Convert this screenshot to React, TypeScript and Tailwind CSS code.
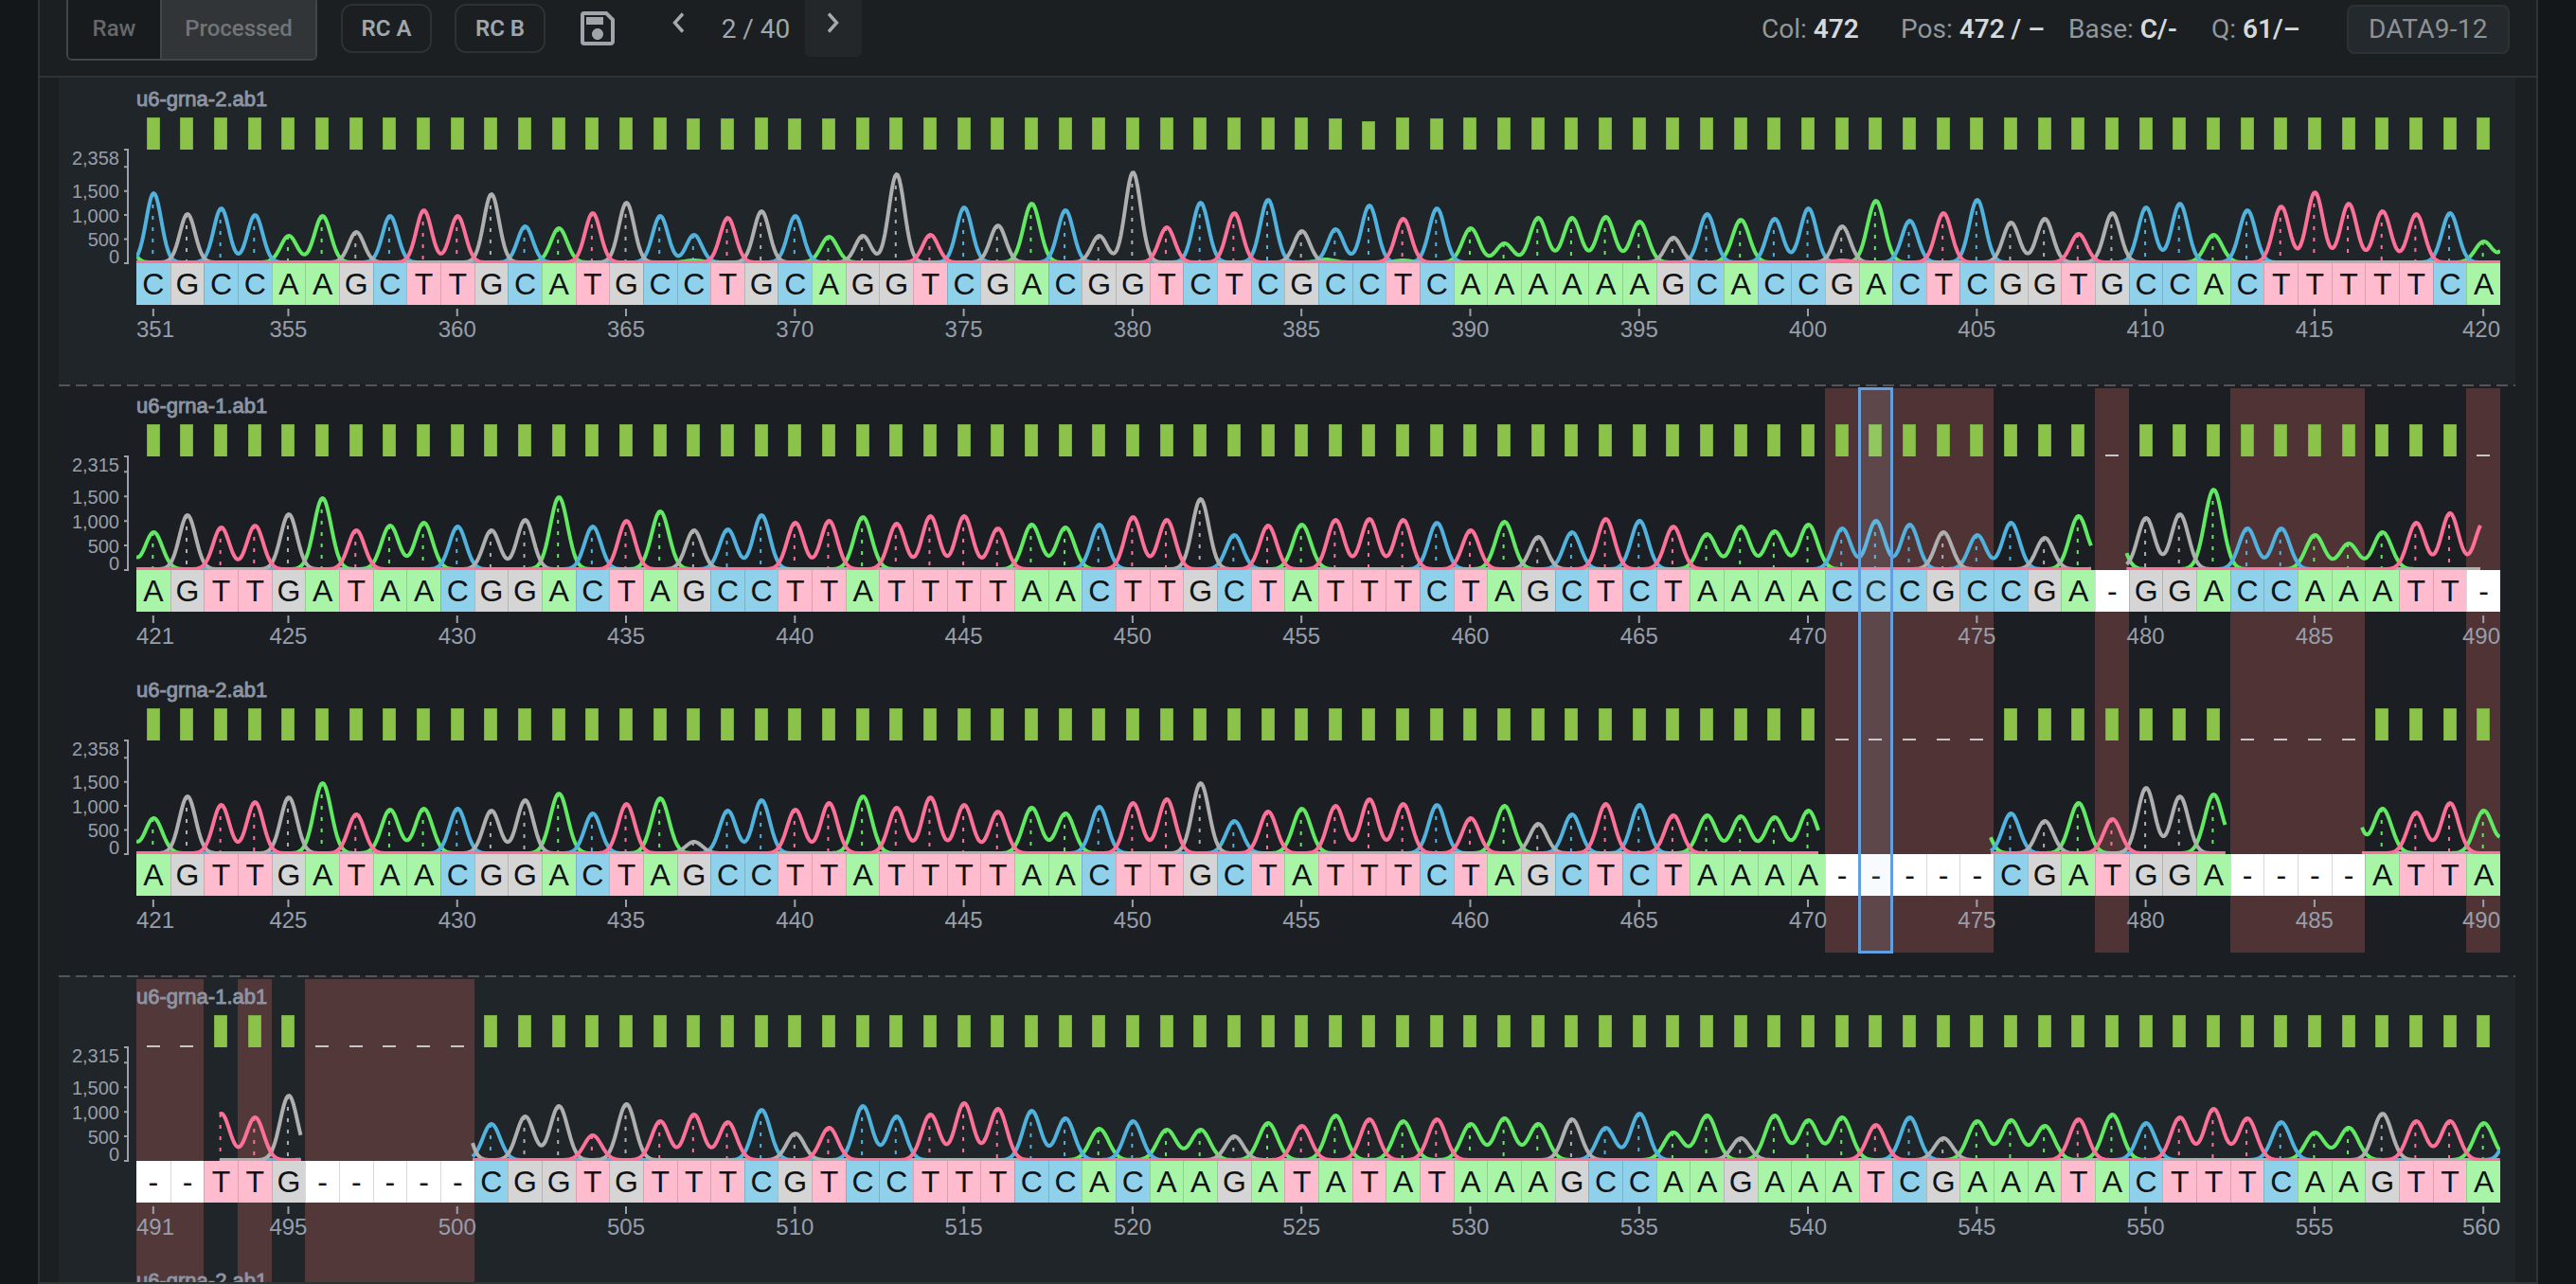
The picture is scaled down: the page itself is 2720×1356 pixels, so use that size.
import { MdOutlineSave } from "react-icons/md";

type Base = "A" | "C" | "G" | "T";

type TrackData = {
  name: string;
  max: number;
  start: number;
  seq: string;
  peaks: number[];
  segments: [number, number][];
  extra: [Base, number, number][];
  low?: Record<number, number>;
};

const COLS = 70;
const WIDTH = 2496;
const COL = WIDTH / COLS;
const PLOT = 120;

const LINE = { A: "#62e964", C: "#50b2dd", G: "#afafaf", T: "#fb7197" };

const CELL: Record<string, string> = {
  A: "bg-[#a9f5a7]",
  C: "bg-[#8fd0ea]",
  G: "bg-[#d5d5d5]",
  T: "bg-[#ffbccf]",
  "-": "bg-white",
};

const trackA: TrackData = {
  name: "u6-grna-2.ab1",
  max: 2358,
  start: 351,
  seq: "CGCCAAGCTTGCATGCCTGCAGGTCGACGGTCTCGCCTCAAAAAAGCACCGACTCGGTGCCACTTTTTCA",
  peaks: [
    73, 51, 57, 50, 28, 49, 32, 49, 55, 49, 72, 38, 36, 52, 63, 49, 29, 47, 54, 49,
    27, 28, 93, 29, 58, 39, 62, 55, 28, 95, 37, 63, 52, 66, 33, 35, 60, 46, 57, 36,
    20, 47, 47, 48, 43, 26, 51, 45, 46, 57, 38, 65, 44, 52, 66, 42, 46, 30, 52, 58,
    62, 29, 55, 59, 74, 62, 54, 51, 52, 22,
  ],
  segments: [[0, 2496]],
  extra: [["A", -1, 60], ["A", 16, 2], ["A", 34.7, 3], ["A", 37, 2], ["T", 50, 2], ["A", 70, 70]],
  low: { 16: 33, 17: 33, 19: 33, 20: 33, 35: 33, 36: 30.5, 38: 33 },
};

const trackB: TrackData = {
  name: "u6-grna-1.ab1",
  max: 2315,
  start: 421,
  seq: "AGTTGATAACGGACTAGCCTTATTTTAACTTGCTATTTCTAGCTCTAAAACCCGCCGA-GGACCAAATT-",
  peaks: [
    39, 57, 44, 46, 58, 75, 41, 46, 49, 45, 41, 52, 76, 45, 51, 61, 41, 42, 57, 49,
    51, 55, 48, 56, 56, 43, 47, 44, 47, 55, 52, 74, 36, 46, 47, 52, 53, 52, 49, 41,
    50, 34, 39, 53, 51, 45, 37, 45, 40, 47, 43, 51, 47, 39, 36, 49, 33, 56, 0, 54,
    58, 84, 43, 43, 36, 27, 39, 49, 59, 0,
  ],
  segments: [[0, 2065], [2101.5, 2475]],
  extra: [["A", -1, 50], ["A", 58, 60], ["G", 58, 6], ["T", 69, 50]],
};

const trackC: TrackData = {
  name: "u6-grna-2.ab1",
  max: 2358,
  start: 421,
  seq: "AGTTGATAACGGACTAGCCTTATTTTAACTTGCTATTTCTAGCTCTAAAA-----CGATGGA----ATTA",
  peaks: [
    37, 60, 51, 54, 59, 74, 41, 46, 47, 47, 45, 56, 63, 42, 52, 58, 12, 45, 56, 46,
    53, 60, 48, 59, 51, 44, 48, 42, 49, 53, 57, 74, 34, 44, 47, 50, 57, 52, 51, 37,
    50, 31, 41, 52, 51, 40, 40, 39, 38, 45, 0, 0, 0, 0, 0, 42, 34, 53, 36, 69,
    60, 62, 0, 0, 0, 0, 47, 43, 53, 45,
  ],
  segments: [[0, 1777], [1958, 2205.5], [2350, 2496]],
  extra: [["A", -1, 50], ["A", 54, 52], ["A", 62, 50], ["A", 65, 70], ["A", 70, 55]],
};

const trackD: TrackData = {
  name: "u6-grna-1.ab1",
  max: 2315,
  start: 491,
  seq: "--TTG-----CGGTGTTTCGTCCTTTCCACAAGATATATAAAGCCAAGAAATCGAAATACTTTCAAGTTA",
  peaks: [
    0, 0, 49, 45, 68, 0, 0, 0, 0, 0, 38, 46, 57, 26, 59, 41, 48, 40, 53, 28,
    34, 57, 46, 48, 60, 54, 52, 44, 33, 41, 32, 32, 25, 39, 36, 47, 43, 41, 43, 38,
    44, 38, 43, 34, 49, 29, 47, 23, 47, 42, 45, 37, 45, 23, 41, 42, 36, 43, 48, 39,
    45, 54, 44, 40, 29, 34, 49, 41, 41, 39,
  ],
  segments: [[88, 174.5], [355, 2496]],
  extra: [["G", 9, 80], ["C", 5, 14], ["C", 70, 75]],
};

function tracePath(track: TrackData, base: Base, from: number, to: number) {
  const peaks = track.peaks
    .map((h, i) => [track.seq[i], i, h] as [string, number, number])
    .concat(track.extra)
    .filter((p) => p[0] === base && p[2] > 0)
    .map(([, i, h]) => ({ x: (i + 0.5) * COL + 0.5, i, h }));

  const points: string[] = [];
  for (let x = from; x <= to; x += 1.5) {
    let y = 0;
    for (const p of peaks) {
      const d = x - p.x;
      if (Math.abs(d) > 60) continue;
      // peaks get wider further along the read
      const s = 8 + (track.start - 351 + p.i) * 0.0075 + (base === "A" ? 0.5 : 0);
      y += p.h * Math.exp(-(d * d) / (2 * s * s));
    }
    points.push(x.toFixed(1) + "," + (PLOT - 1 - y).toFixed(2));
  }
  return "M" + points.join("L");
}

function Trace({ track }: { track: TrackData }) {
  return (
    <svg width={WIDTH} height={PLOT} className="block" fill="none">
      {track.peaks.map((h, i) =>
        h > 0 ? (
          <line
            key={i}
            x1={(i + 0.5) * COL - 0.5}
            x2={(i + 0.5) * COL - 0.5}
            y1={PLOT - 1 - h}
            y2={PLOT}
            stroke={LINE[track.seq[i] as Base]}
            strokeWidth="2"
            strokeDasharray="4 8"
          />
        ) : null
      )}
      {(["A", "C", "G", "T"] as Base[]).map((base) =>
        track.segments.map(([from, to]) => (
          <path
            key={base + from}
            d={tracePath(track, base, from, to)}
            stroke={LINE[base]}
            strokeWidth="4"
            strokeLinejoin="round"
          />
        ))
      )}
    </svg>
  );
}

function Axis({ max }: { max: number }) {
  const y = (v: number) => PLOT - (v * PLOT) / max;
  return (
    <svg width="82" height="124" className="block overflow-visible font-['Liberation_Sans',sans-serif] text-[20px]">
      <path
        d={[max, 2000, 1500, 1000, 500, 0].map((v) => `M69 ${y(v)}H73`).join("") + "M73 -1V121"}
        stroke="#9aa1ad"
        strokeWidth="2"
      />
      <g fill="#979eaa" textAnchor="end">
        <text x="64" y="16">{max.toLocaleString("en-US")}</text>
        <text x="64" y={y(1500) + 7.5}>1,500</text>
        <text x="64" y={y(1000) + 7.5}>1,000</text>
        <text x="64" y={y(500) + 7.5}>500</text>
        <text x="64" y="120">0</text>
      </g>
    </svg>
  );
}

function Ruler({ start }: { start: number }) {
  const ticks: number[] = [];
  for (let i = 0; i < COLS; i++) {
    if (i === 0 || (start + i) % 5 === 0) ticks.push(i);
  }
  return (
    <svg width={WIDTH} height="40" className="block font-['Liberation_Sans',sans-serif] text-[24px]">
      {ticks.map((i) => {
        const x = (i + 0.5) * COL;
        const first = i === 0;
        const last = i === COLS - 1;
        return (
          <g key={i}>
            <path d={`M${x} 4V12`} stroke="#9aa1ad" strokeWidth="2" />
            <text
              x={first ? 0 : last ? WIDTH : x}
              y="34"
              fill="#979eaa"
              textAnchor={first ? "start" : last ? "end" : "middle"}
            >
              {start + i}
            </text>
          </g>
        );
      })}
    </svg>
  );
}

function TrackName({ name }: { name: string }) {
  return (
    <div className="h-[38px] pt-2 font-['Liberation_Sans',sans-serif] text-[22px] leading-[22px] text-[#8d94a2] [-webkit-text-stroke:0.9px_#8d94a2]">
      {name}
    </div>
  );
}

function Track({ track }: { track: TrackData }) {
  return (
    <div className="relative flex h-[300px] shrink-0">
      <div className="w-[82px] shrink-0 pt-[72px]">
        <Axis max={track.max} />
      </div>
      <div className="w-[2496px] shrink-0 font-['Liberation_Sans',sans-serif]">
        <TrackName name={track.name} />
        <div className="grid h-[34px] grid-cols-[repeat(70,minmax(0,1fr))] items-end justify-items-center">
          {track.seq.split("").map((b, i) =>
            b === "-" ? (
              <span key={i} className="h-[2px] w-[14px] bg-[#c9c5c6]" />
            ) : (
              <span
                key={i}
                className="w-[14px] rounded-t-[1px] border border-b-0 border-[#79ab42] bg-[#8bc34a]"
                style={{ height: track.low?.[i] ?? 34 }}
              />
            )
          )}
        </div>
        <Trace track={track} />
        <div className="grid h-[44px] grid-cols-[repeat(70,minmax(0,1fr))] text-center text-[32px] leading-[44px] text-[#101214]">
          {track.seq.split("").map((b, i) => (
            <span key={i} className={"border-l border-black/15 first:border-l-0 " + CELL[b]}>
              {b}
            </span>
          ))}
        </div>
        <Ruler start={track.start} />
      </div>
    </div>
  );
}

function Group({
  tracks,
  next,
  bands = [],
  selected,
  shaded,
  first,
}: {
  tracks: TrackData[];
  next?: string;
  bands?: [number, number][];
  selected?: number;
  shaded?: boolean;
  first?: boolean;
}) {
  return (
    <section
      className={
        "flex shrink-0 flex-col " + (next ? "" : "pb-5 ") + (shaded ? "bg-[#202529]" : "bg-[#1b1e22]")
      }
    >
      {first ? (
        <div className="h-1" />
      ) : (
        <div className="mb-[2px] h-[2px] bg-[repeating-linear-gradient(90deg,#50555c_0_12px,transparent_12px_18px)]" />
      )}
      <div className="relative">
        {bands.map(([from, count]) => (
          <div
            key={from}
            className="absolute top-0 bottom-1 bg-[#eb726e]/25"
            style={{ left: 82 + from * COL, width: count * COL }}
          />
        ))}
        {tracks.map((t, i) => (
          <Track key={i} track={t} />
        ))}
        {next && (
          <div className="relative ml-[82px]">
            <TrackName name={next} />
          </div>
        )}
        {selected !== undefined && (
          <div
            className="absolute top-[-1px] bottom-[3px] border-[3px] border-[#639edf] bg-[#c8dceb]/12"
            style={{ left: 81 + selected * COL, width: COL + 2 }}
          />
        )}
      </div>
    </section>
  );
}

function Chevron({ d }: { d: string }) {
  return (
    <svg width="16" height="24" fill="none" stroke="#a4a9ae" strokeWidth="3.4">
      <path d={d} />
    </svg>
  );
}

function Stat({ label, value, className }: { label: string; value: string; className: string }) {
  return (
    <div className={"shrink-0 whitespace-pre text-[28px] text-[#92979c] " + className}>
      {label} <b className="font-semibold text-[#d6d9dc]">{value}</b>
    </div>
  );
}

function Toolbar() {
  return (
    <header className="h-[82px] shrink-0 border-b-2 border-[#2e3333] bg-[#1b1f21]">
      <div className="flex h-[60px] items-center pl-[28px]">
        <div className="flex h-[68px] w-[265px] shrink-0 overflow-hidden rounded-md border-2 border-[#414746] text-[24px] font-medium">
          <button className="w-[99px] border-r-2 border-[#414746] bg-[#181b1d] text-[#64686b]">Raw</button>
          <button className="flex-1 bg-[#323537] text-[#707477]">Processed</button>
        </div>
        <button className="ml-[25px] h-[52px] w-[96px] rounded-[12px] border-2 border-[#2c3133] text-[24px] font-semibold text-[#a1a6aa]">
          RC A
        </button>
        <button className="ml-6 h-[52px] w-[96px] rounded-[12px] border-2 border-[#2c3133] text-[24px] font-semibold text-[#a1a6aa]">
          RC B
        </button>
        <MdOutlineSave className="ml-[31px] size-12 text-[#9fa5ab]" />
        <button className="ml-[31px] flex h-[72px] w-[60px] items-center justify-center self-end">
          <Chevron d="M13 2.5L4.5 12L13 21.5" />
        </button>
        <span className="w-[104px] pt-px text-center text-[28px] text-[#a1a6aa]">2 / 40</span>
        <button className="flex h-[72px] w-[60px] items-center justify-center self-end rounded-md bg-[#23272a]">
          <Chevron d="M3 2.5L11.5 12L3 21.5" />
        </button>
        <div className="ml-auto flex items-center pt-px">
          <Stat label="Col:" value="472" className="w-[147px]" />
          <Stat label="Pos:" value="472 / –" className="w-[177px]" />
          <Stat label="Base:" value="C/-" className="w-[151px]" />
          <Stat label="Q:" value="61/–" className="w-[143px]" />
          <div className="mr-7 flex h-[52px] w-[172px] items-center justify-center rounded-lg border-2 border-[#2c3232] bg-[#23292d] text-[28px] tracking-[0.3px] text-[#8d9297]">
            DATA9-12
          </div>
        </div>
      </div>
    </header>
  );
}

export default function App() {
  return (
    <div className="h-[1356px] w-[2720px] overflow-hidden bg-[#13171a] px-10 font-[Roboto,sans-serif]">
      <div className="flex h-full flex-col overflow-hidden border-2 border-t-0 border-[#2e3333] bg-[#1b1f21]">
        <Toolbar />
        <main className="ml-5 flex w-[2594px] min-h-0 flex-1 flex-col overflow-hidden">
          <Group first shaded tracks={[trackA]} />
          <Group
            tracks={[trackB, trackC]}
            bands={[[50, 5], [58, 1], [62, 4], [69, 1]]}
            selected={51}
          />
          <Group
            shaded
            tracks={[trackD]}
            next="u6-grna-2.ab1"
            bands={[[0, 2], [3, 1], [5, 5]]}
          />
        </main>
      </div>
    </div>
  );
}
